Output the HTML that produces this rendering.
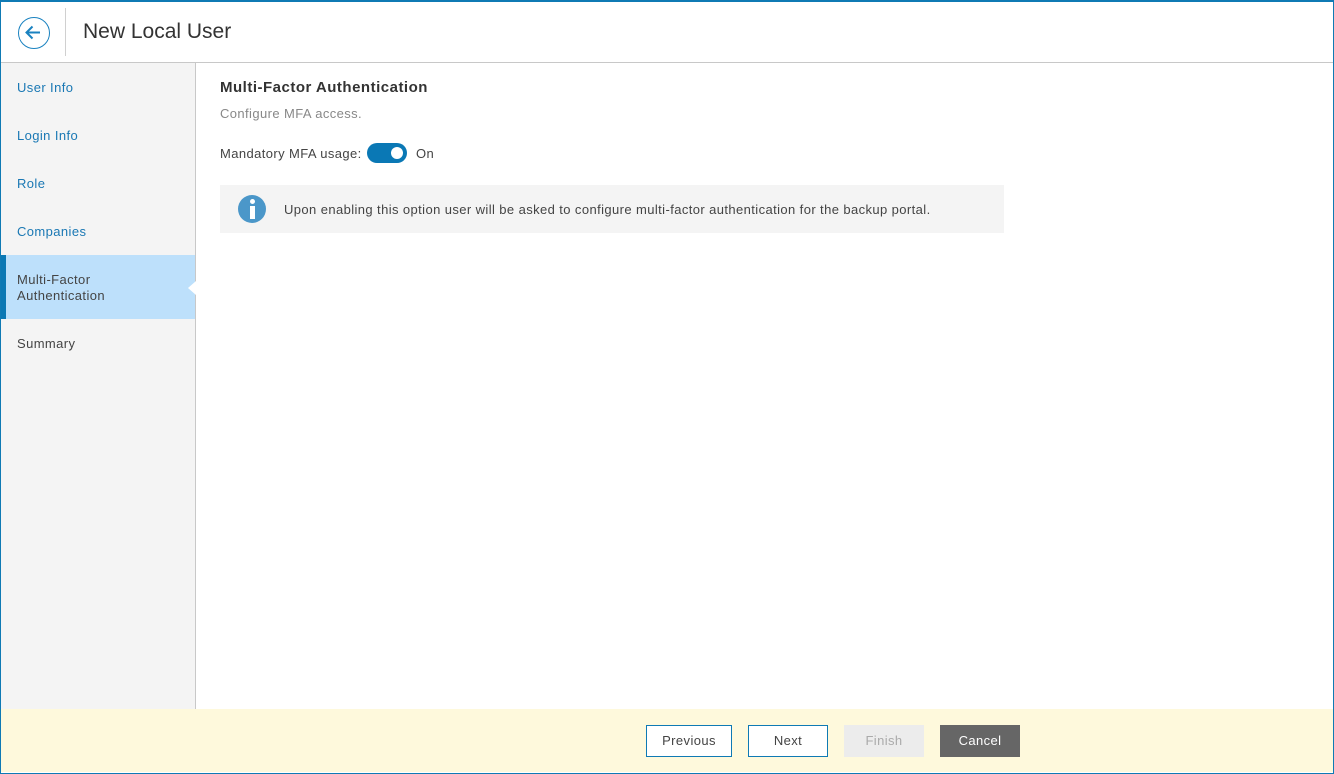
<!DOCTYPE html>
<html><head><style>
*{margin:0;padding:0;box-sizing:border-box}
body{width:1334px;height:774px;overflow:hidden;font-family:"Liberation Sans",sans-serif;background:#fff;position:relative;letter-spacing:0.4px}
.frame{position:absolute;left:0;top:0;width:1334px;height:774px;border:1px solid #0f7ab4;border-top:2px solid #0f7ab4;}
.hdr{position:absolute;left:1px;top:2px;width:1332px;height:61px;border-bottom:1px solid #c8c8c8;background:#fff}
.back{position:absolute;left:17px;top:15px;width:32px;height:32px;border:1.5px solid #1a82c0;border-radius:50%}
.sep{position:absolute;left:64px;top:6px;width:1px;height:48px;background:#d0d0d0}
.title{position:absolute;left:82px;top:18px;font-size:21px;color:#333;letter-spacing:0}
.side{position:absolute;left:1px;top:63px;width:195px;height:646px;background:#f4f4f4;border-right:1px solid #c8c8c8}
.it{position:absolute;left:16px;font-size:13px;color:#1a78b4}
.act{position:absolute;left:0;top:192px;width:194px;height:64px;background:#bde0fb;border-left:5px solid #0b78b4}
.act span{position:absolute;left:11px;top:17px;font-size:13px;color:#444;line-height:16px}
.notch{position:absolute;left:188px;top:281px;width:0;height:0;border-top:7px solid transparent;border-bottom:7px solid transparent;border-right:8px solid #fff}
.foot{position:absolute;left:1px;top:709px;width:1332px;height:63px;background:#fef9dc}
.btn{position:absolute;top:725px;height:32px;font-size:13px;text-align:center;line-height:30px}
</style></head><body>
<div class="hdr">
<div class="back"><svg width="29" height="29" viewBox="0 0 29 29" style="position:absolute;left:0;top:0"><path d="M21 14.5H8M13.5 8.5L7.5 14.5L13.5 20.5" stroke="#1a82c0" stroke-width="2" fill="none"/></svg></div>
<div class="sep"></div>
<div class="title">New Local User</div>
</div>
<div class="side">
<div class="it" style="top:17px">User Info</div>
<div class="it" style="top:65px">Login Info</div>
<div class="it" style="top:113px">Role</div>
<div class="it" style="top:161px">Companies</div>
<div class="act"><span>Multi-Factor<br>Authentication</span></div>
<div class="it" style="top:273px;color:#444">Summary</div>
</div>
<div class="notch"></div>
<div style="position:absolute;left:220px;top:79px;font-size:15px;font-weight:bold;color:#333;letter-spacing:0.5px">Multi-Factor Authentication</div>
<div style="position:absolute;left:220px;top:106px;font-size:13px;color:#888">Configure MFA access.</div>
<div style="position:absolute;left:220px;top:146px;font-size:13px;color:#444">Mandatory MFA usage:</div>
<div style="position:absolute;left:367px;top:143px;width:40px;height:20px;border-radius:10px;background:#0a78b5"><div style="position:absolute;left:24px;top:4px;width:12px;height:12px;border-radius:50%;background:#fff"></div></div>
<div style="position:absolute;left:416px;top:146px;font-size:13px;color:#444">On</div>
<div style="position:absolute;left:220px;top:185px;width:784px;height:48px;background:#f4f4f4">
<div style="position:absolute;left:18px;top:10px;width:28px;height:28px;border-radius:50%;background:#4b97c9"><div style="position:absolute;left:12px;top:4px;width:5px;height:5px;background:#fff;border-radius:3px"></div><div style="position:absolute;left:12px;top:11px;width:5px;height:13px;background:#fff"></div></div>
<div style="position:absolute;left:64px;top:17px;font-size:13px;color:#444">Upon enabling this option user will be asked to configure multi-factor authentication for the backup portal.</div>
</div>
<div class="foot"></div>
<div class="btn" style="left:646px;width:86px;border:1px solid #0f7ab4;background:#fff;color:#444">Previous</div>
<div class="btn" style="left:748px;width:80px;border:1px solid #0f7ab4;background:#fff;color:#444">Next</div>
<div class="btn" style="left:844px;width:80px;background:#ececec;color:#aaa;line-height:32px">Finish</div>
<div class="btn" style="left:940px;width:80px;background:#666;color:#fff;line-height:32px">Cancel</div>
<div class="frame"></div>
</body></html>
